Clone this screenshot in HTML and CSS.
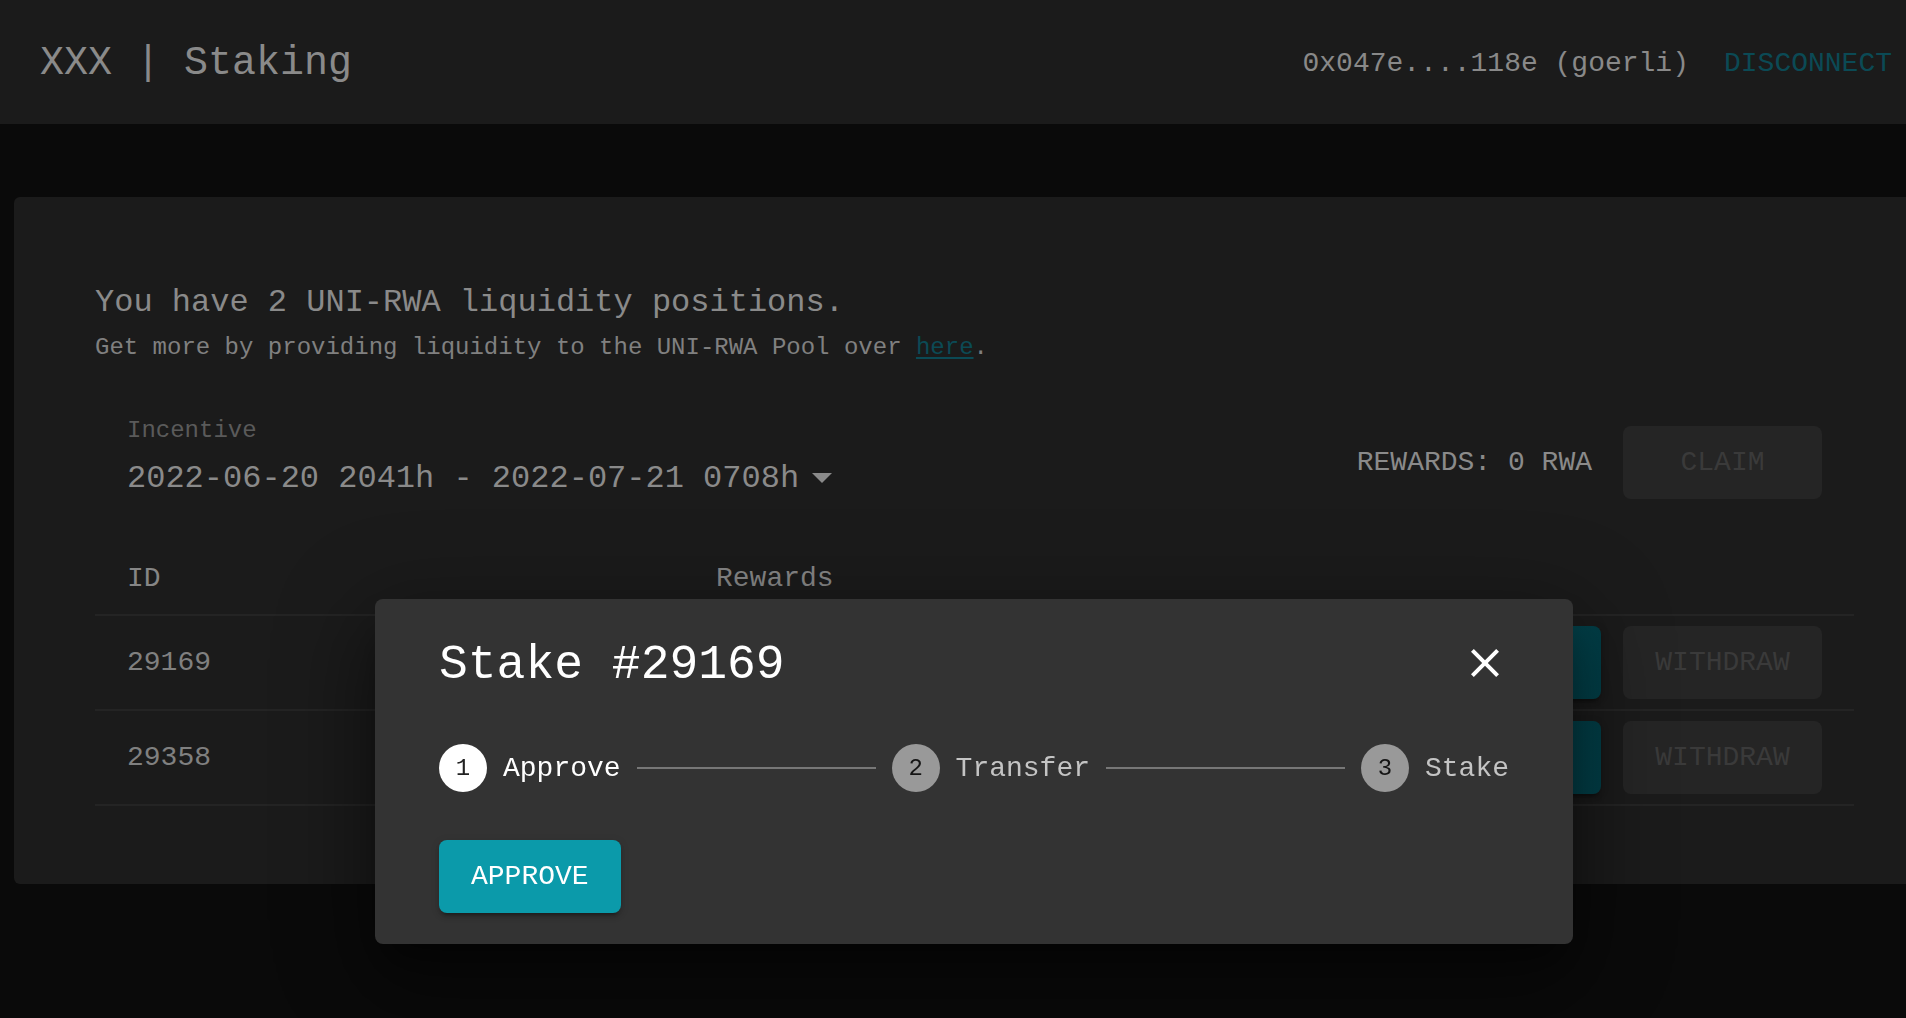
FILE: index.html
```html
<!DOCTYPE html>
<html lang="en">
<head>
<meta charset="utf-8">
<title>XXX | Staking</title>
<link rel="stylesheet" href="styles.css">
</head>
<body>
<header class="topbar">
  <div class="brand">XXX | Staking</div>
  <div class="account">
    <span class="address">0x047e....118e (goerli)</span>
    <span class="disconnect">DISCONNECT</span>
  </div>
</header>
<main class="main">
  <section class="card">
    <h1 class="headline">You have 2 UNI-RWA liquidity positions.</h1>
    <p class="subline">Get more by providing liquidity to the UNI-RWA Pool over <a class="link" href="#">here</a>.</p>
    <div class="incentive-row">
      <div class="incentive">
        <div class="incentive-label">Incentive</div>
        <div class="incentive-value">2022-06-20 2041h - 2022-07-21 0708h<svg class="caret" viewBox="0 0 20 10"><path d="M0 0 L10 10 L20 0Z"/></svg></div>
      </div>
      <div class="rewards">
        <span class="rewards-text">REWARDS: 0 RWA</span>
        <button class="btn btn-disabled">CLAIM</button>
      </div>
    </div>
    <div class="table">
      <div class="tr th">
        <div class="td">ID</div>
        <div class="td right">Rewards</div>
        <div class="td"></div>
      </div>
      <div class="tr">
        <div class="td">29169</div>
        <div class="td right"></div>
        <div class="td actions"><button class="btn btn-teal" aria-label="Stake"></button><button class="btn btn-disabled">WITHDRAW</button></div>
      </div>
      <div class="tr">
        <div class="td">29358</div>
        <div class="td right"></div>
        <div class="td actions"><button class="btn btn-teal" aria-label="Stake"></button><button class="btn btn-disabled">WITHDRAW</button></div>
      </div>
    </div>
  </section>
</main>
<div class="backdrop">
  <div class="dialog">
    <div class="dialog-head">
      <h2 class="dialog-title">Stake #29169</h2>
      <svg class="close" viewBox="0 0 24 24"><path d="M19 6.41 17.59 5 12 10.59 6.41 5 5 6.41 10.59 12 5 17.59 6.41 19 12 13.41 17.59 19 19 17.59 13.41 12z"/></svg>
    </div>
    <div class="stepper">
      <div class="step active"><span class="step-icon">1</span><span class="step-label">Approve</span></div>
      <div class="connector"></div>
      <div class="step"><span class="step-icon">2</span><span class="step-label">Transfer</span></div>
      <div class="connector"></div>
      <div class="step"><span class="step-icon">3</span><span class="step-label">Stake</span></div>
    </div>
    <button class="btn btn-primary">APPROVE</button>
  </div>
</div>
</body>
</html>
```
FILE: styles.css
```css
* { box-sizing: border-box; }
html, body { margin: 0; padding: 0; }
body {
  background: #0a0a0a;
  font-family: "Liberation Mono", "DejaVu Sans Mono", monospace;
  color: #8a8a8a;
  width: 1906px;
  height: 1018px;
  overflow: hidden;
  position: relative;
}
.topbar {
  height: 124px;
  padding: 3px 14px 0 40px;
  background: #1b1b1b;
  display: flex;
  align-items: center;
  justify-content: space-between;
}
.brand { font-size: 40px; color: #8a8a8a; }
.account { display: flex; align-items: center; gap: 35px; font-size: 28px; }
.address { color: #898989; }
.disconnect { color: #0b4a55; }

.main { padding: 73px 0 0 14px; }
.card {
  width: 1921px;
  height: 687px;
  background: #1b1b1b;
  border-radius: 6px;
  padding: 86px 0 0 81px;
}
.headline { margin: 0; font-size: 32px; line-height: 40px; font-weight: 400; color: #8a8a8a; }
.subline { margin: 9px 0 0; font-size: 24px; line-height: 32px; color: #808080; }
.link { color: #0b4a55; text-decoration: underline; text-underline-offset: 3px; }

.incentive-row {
  width: 1759px;
  margin-top: 51px;
  padding: 0 32px;
  display: flex;
  justify-content: space-between;
  align-items: flex-end;
}
.incentive-label { font-size: 24px; line-height: 32px; color: #5a5a5a; }
.incentive-value {
  margin-top: 12px;
  font-size: 32px;
  line-height: 40px;
  color: #8a8a8a;
  display: flex;
  align-items: center;
}
.caret { width: 20px; height: 10px; margin-left: 13px; margin-bottom: 3px; fill: #8a8a8a; }
.rewards { display: flex; align-items: center; }
.rewards-text { font-size: 28px; margin-right: 31px; color: #8a8a8a; }

.btn {
  font-family: inherit;
  font-size: 28px;
  line-height: 49px;
  padding: 12px 32px;
  border: 0;
  border-radius: 8px;
  width: 199px;
  text-align: center;
  white-space: nowrap;
}
.btn-disabled { background: #252525; color: #3a3a3a; }
.btn-teal {
  width: 148px;
  height: 73px;
  background: linear-gradient(90deg, #034a55, #023f48);
  box-shadow: 0 6px 2px -4px rgba(0,0,0,.2), 0 4px 4px 0 rgba(0,0,0,.14), 0 2px 10px 0 rgba(0,0,0,.12);
}

.table { width: 1759px; margin-top: 35px; }
.tr {
  display: grid;
  grid-template-columns: 589px 179px 1fr;
  height: 95px;
  border-bottom: 2px solid #242424;
  align-items: center;
}
.th { height: 82px; align-items: end; padding-bottom: 20px; }
.td { padding: 0 32px; font-size: 28px; color: #808080; }
.th .td { color: #868686; }
.right { text-align: right; }
.actions { display: flex; justify-content: flex-end; gap: 22px; }

.backdrop { position: fixed; inset: 0; }
.dialog {
  position: absolute;
  left: 375px;
  top: 599px;
  width: 1198px;
  height: 345px;
  background: #333333;
  border-radius: 8px;
  padding: 30px 64px 31px;
  color: #fff;
  box-shadow: 0 22px 30px -14px rgba(0,0,0,.4), 0 48px 76px 6px rgba(0,0,0,.28), 0 18px 92px 16px rgba(0,0,0,.24);
}
.dialog-head {
  display: flex;
  justify-content: space-between;
  align-items: center;
  height: 72px;
}
.dialog-title { margin: 0; font-size: 48px; line-height: 72px; font-weight: 400; color: #fff; }
.close { width: 48px; height: 48px; fill: #fff; margin-bottom: 4px; }

.stepper { display: flex; align-items: center; margin-top: 43px; height: 48px; }
.step { display: flex; align-items: center; gap: 16px; }
.step-icon {
  width: 48px;
  height: 48px;
  border-radius: 50%;
  background: #999999;
  color: #151515;
  font-size: 24px;
  display: flex;
  align-items: center;
  justify-content: center;
}
.step-label { font-size: 28px; color: #c4c4c4; }
.step.active .step-icon { background: #ffffff; color: #222; }
.step.active .step-label { color: #ffffff; }
.connector { flex: 1; height: 2px; background: #777777; margin: 0 16px; }

.btn-primary {
  width: auto;
  margin-top: 48px;
  background: #0b9aaa;
  color: #fff;
  box-shadow: 0 6px 2px -4px rgba(0,0,0,.2), 0 4px 4px 0 rgba(0,0,0,.14), 0 2px 10px 0 rgba(0,0,0,.12);
}
```
